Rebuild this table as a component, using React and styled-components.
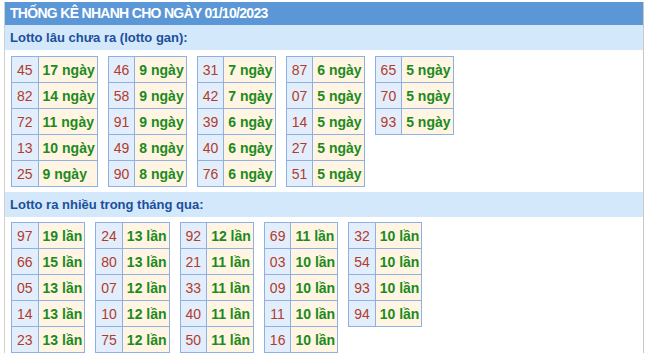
import React from "react";
import styled, { createGlobalStyle } from "styled-components";

const GlobalStyle = createGlobalStyle`
  body {
    margin: 0;
    background: #ffffff;
    font-family: Arial, "Liberation Sans", sans-serif;
  }
`;

const Box = styled.div`
  margin: 2px 0 0 4px;
  width: 640px;
  border-left: 1px solid #d0d0d0;
  border-right: 1px solid #c8c8c8;
  box-sizing: border-box;
`;

const Title = styled.div`
  height: 23px;
  background: #5b97d6;
  color: #ffffff;
  font-size: 14px;
  font-weight: bold;
  line-height: 23px;
  padding-left: 5px;
  letter-spacing: -0.7px;
`;

const SubHead = styled.div`
  height: 25px;
  background: #d4e8fb;
  color: #1b4f9b;
  font-size: 13px;
  font-weight: bold;
  line-height: 25px;
  padding-left: 5px;
  margin-top: ${(p) => p.$top || 0}px;
`;

const Tables = styled.div`
  display: flex;
  align-items: flex-start;
  gap: 10px;
  padding: ${(p) => p.$top}px 0 0 6px;
`;

const Table = styled.table`
  border-collapse: collapse;
  border: 1px solid #8fb0e3;
`;

const Cell = styled.td`
  border: 1px solid #8fb0e3;
  height: 26px;
  padding: 0;
  box-sizing: border-box;
  font-size: 14px;
  white-space: nowrap;
`;

const Num = styled(Cell)`
  background: #e2eefc;
  color: #b23b2b;
  text-align: center;
  padding: 0 5px;
`;

const Val = styled(Cell)`
  background: #fff5e2;
  color: #1c8a1c;
  font-weight: bold;
  padding: 0 2px 0 4px;
`;

const gan = [
  [["45", 17], ["82", 14], ["72", 11], ["13", 10], ["25", 9]],
  [["46", 9], ["58", 9], ["91", 9], ["49", 8], ["90", 8]],
  [["31", 7], ["42", 7], ["39", 6], ["40", 6], ["76", 6]],
  [["87", 6], ["07", 5], ["14", 5], ["27", 5], ["51", 5]],
  [["65", 5], ["70", 5], ["93", 5]],
];

const nhieu = [
  [["97", 19], ["66", 15], ["05", 13], ["14", 13], ["23", 13]],
  [["24", 13], ["80", 13], ["07", 12], ["10", 12], ["75", 12]],
  [["92", 12], ["21", 11], ["33", 11], ["40", 11], ["50", 11]],
  [["69", 11], ["03", 10], ["09", 10], ["11", 10], ["16", 10]],
  [["32", 10], ["54", 10], ["93", 10], ["94", 10]],
];

function Group({ data, unit, top }) {
  return (
    <Tables $top={top}>
      {data.map((col, i) => (
        <Table key={i}>
          <tbody>
            {col.map(([n, v]) => (
              <tr key={n}>
                <Num>{n}</Num>
                <Val>
                  {v} {unit}
                </Val>
              </tr>
            ))}
          </tbody>
        </Table>
      ))}
    </Tables>
  );
}

export default function App() {
  return (
    <>
      <GlobalStyle />
      <Box>
        <Title>THỐNG KÊ NHANH CHO NGÀY 01/10/2023</Title>
        <SubHead>Lotto lâu chưa ra (lotto gan):</SubHead>
        <Group data={gan} unit="ngày" top={6} />
        <SubHead $top={5}>Lotto ra nhiều trong tháng qua:</SubHead>
        <Group data={nhieu} unit="lần" top={5} />
      </Box>
    </>
  );
}
